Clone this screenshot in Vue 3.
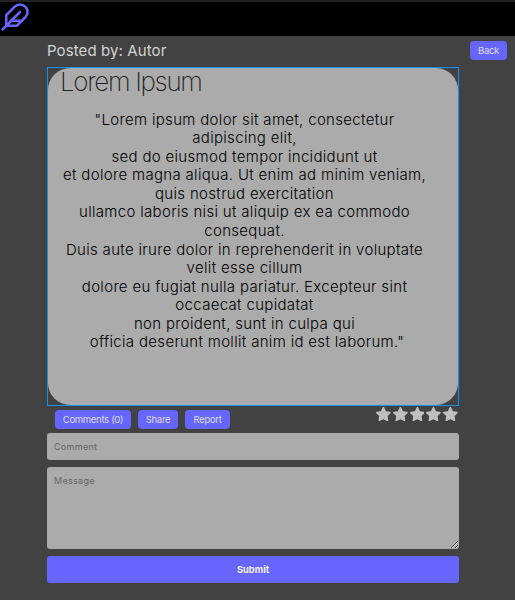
<script setup>
import { ref } from 'vue'

const lines = [
  '"Lorem ipsum dolor sit amet, consectetur',
  'adipiscing elit,',
  'sed do eiusmod tempor incididunt ut',
  'et dolore magna aliqua. Ut enim ad minim veniam,',
  'quis nostrud exercitation',
  'ullamco laboris nisi ut aliquip ex ea commodo',
  'consequat.',
  'Duis aute irure dolor in reprehenderit in voluptate',
  'velit esse cillum',
  'dolore eu fugiat nulla pariatur. Excepteur sint',
  'occaecat cupidatat',
  'non proident, sunt in culpa qui',
  'officia deserunt mollit anim id est laborum."',
]
const comment = ref('')
const message = ref('')
</script>

<template>
  <div class="page">
    <header class="bar">
      <svg class="logo" viewBox="0 0 24 24" fill="none" stroke="currentColor" stroke-width="2" stroke-linecap="round" stroke-linejoin="round">
        <path d="M20.24 12.24a6 6 0 0 0-8.49-8.49L5 10.5V19h8.5z" />
        <line x1="16" y1="8" x2="2" y2="22" />
        <line x1="17.5" y1="15" x2="9" y2="15" />
      </svg>
    </header>
    <div class="top">
      <span class="author">Posted by: Autor</span>
      <button class="btn back">Back</button>
    </div>
    <main class="column">
      <div class="frame">
        <article class="card">
          <h1 class="title">Lorem Ipsum</h1>
          <p class="text">
            <span v-for="line in lines" :key="line" class="line">{{ line }}</span>
          </p>
        </article>
      </div>
      <div class="actions">
        <button class="btn comments">Comments (0)</button>
        <button class="btn share">Share</button>
        <button class="btn report">Report</button>
        <div class="stars">
          <svg v-for="n in 5" :key="n" class="star" viewBox="20 0 536 512">
            <path fill="currentColor" d="M259.3 17.8L194 150.2 47.900 171.500c-26.200 3.800-36.700 36.100-17.700 54.600l105.700 103-25 145.500c-4.500 26.300 23.200 46 46.400 33.700L288 439.600l130.700 68.700c23.200 12.200 50.900-7.400 46.400-33.700l-25-145.500 105.700-103c19-18.500 8.500-50.800-17.700-54.600L382 150.200 316.700 17.800c-11.700-23.600-45.600-23.900-57.400 0z" />
          </svg>
        </div>
      </div>
      <form class="form" @submit.prevent>
        <input v-model="comment" class="field" placeholder="Comment" />
        <textarea v-model="message" class="field area" placeholder="Message"></textarea>
        <button class="submit">Submit</button>
      </form>
    </main>
  </div>
</template>

<style>
body {
  background: #424242;
}
</style>

<style scoped>
.page {
  box-sizing: border-box;
  height: 600px;
  overflow: hidden;
  background: #424242;
  border-top: 2px solid #222;
  font-family: Inter, sans-serif;
}
.bar {
  height: 34px;
  background: #000;
}
.logo {
  display: block;
  width: 30px;
  height: 30px;
  margin-left: -0.5px;
  color: #6666ff;
}
.top {
  display: flex;
  justify-content: space-between;
  height: 31px;
  padding: 0 8px 0 47px;
}
.author {
  padding-top: 5px;
  color: #d3d3d3;
  font-size: 15px;
  letter-spacing: 0.1px;
  line-height: 20px;
}
button {
  font-family: inherit;
  border: 0;
  padding: 0;
  margin: 0;
}
.btn {
  height: 19px;
  border-radius: 4px;
  background: #6666ff;
  color: #dcdcdc;
  font-size: 9.5px;
  letter-spacing: -0.3px;
  line-height: 19px;
  white-space: nowrap;
}
.back {
  width: 37px;
  margin-top: 5px;
}
.column {
  width: 412px;
  margin-left: 47px;
}
.frame {
  box-sizing: border-box;
  height: 339px;
  border: 1px solid #0c94f4;
}
.card {
  height: 337px;
  border-radius: 22px;
  background: #ababab;
}
.title {
  margin: 0 0 0 12px;
  height: 42px;
  color: #222;
  font-size: 26px;
  font-weight: 200;
  letter-spacing: -1.33px;
  line-height: 27px;
}
.text {
  margin: 0 17px 0 0;
  padding-top: 0.5px;
  color: #000;
  font-size: 15px;
  font-weight: 300;
  letter-spacing: 0.32px;
  line-height: 18.58px;
  text-align: center;
}
.line {
  display: block;
  white-space: nowrap;
}
.line:last-child {
  padding-left: 5px;
}
.actions {
  display: flex;
  align-items: flex-start;
  height: 27px;
  padding-left: 8px;
}
.actions .btn {
  margin: 4px 7px 0 0;
}
.comments {
  width: 76px;
}
.share {
  width: 40px;
}
.report {
  width: 45px;
}
.stars {
  display: flex;
  gap: 2px;
  margin: 0.5px 1px 0 auto;
}
.star {
  width: 14.8px;
  height: 14.2px;
  color: #bfbfbf;
}
.form {
  display: flex;
  flex-direction: column;
  gap: 7px;
}
.field {
  box-sizing: border-box;
  width: 100%;
  height: 27px;
  margin: 0;
  padding: 0 7px;
  border: 0;
  border-radius: 3px;
  background: #ababab;
  font-family: inherit;
  font-size: 9px;
  letter-spacing: 0.3px;
  color: #222;
}
.area {
  height: 82px;
  padding-top: 8px;
  resize: vertical;
}
.field::placeholder {
  color: #666;
}
.submit {
  height: 27px;
  border-radius: 3px;
  background: #6666ff;
  color: #eee;
  font-size: 9.3px;
  font-weight: 700;
  line-height: 27px;
}
</style>
